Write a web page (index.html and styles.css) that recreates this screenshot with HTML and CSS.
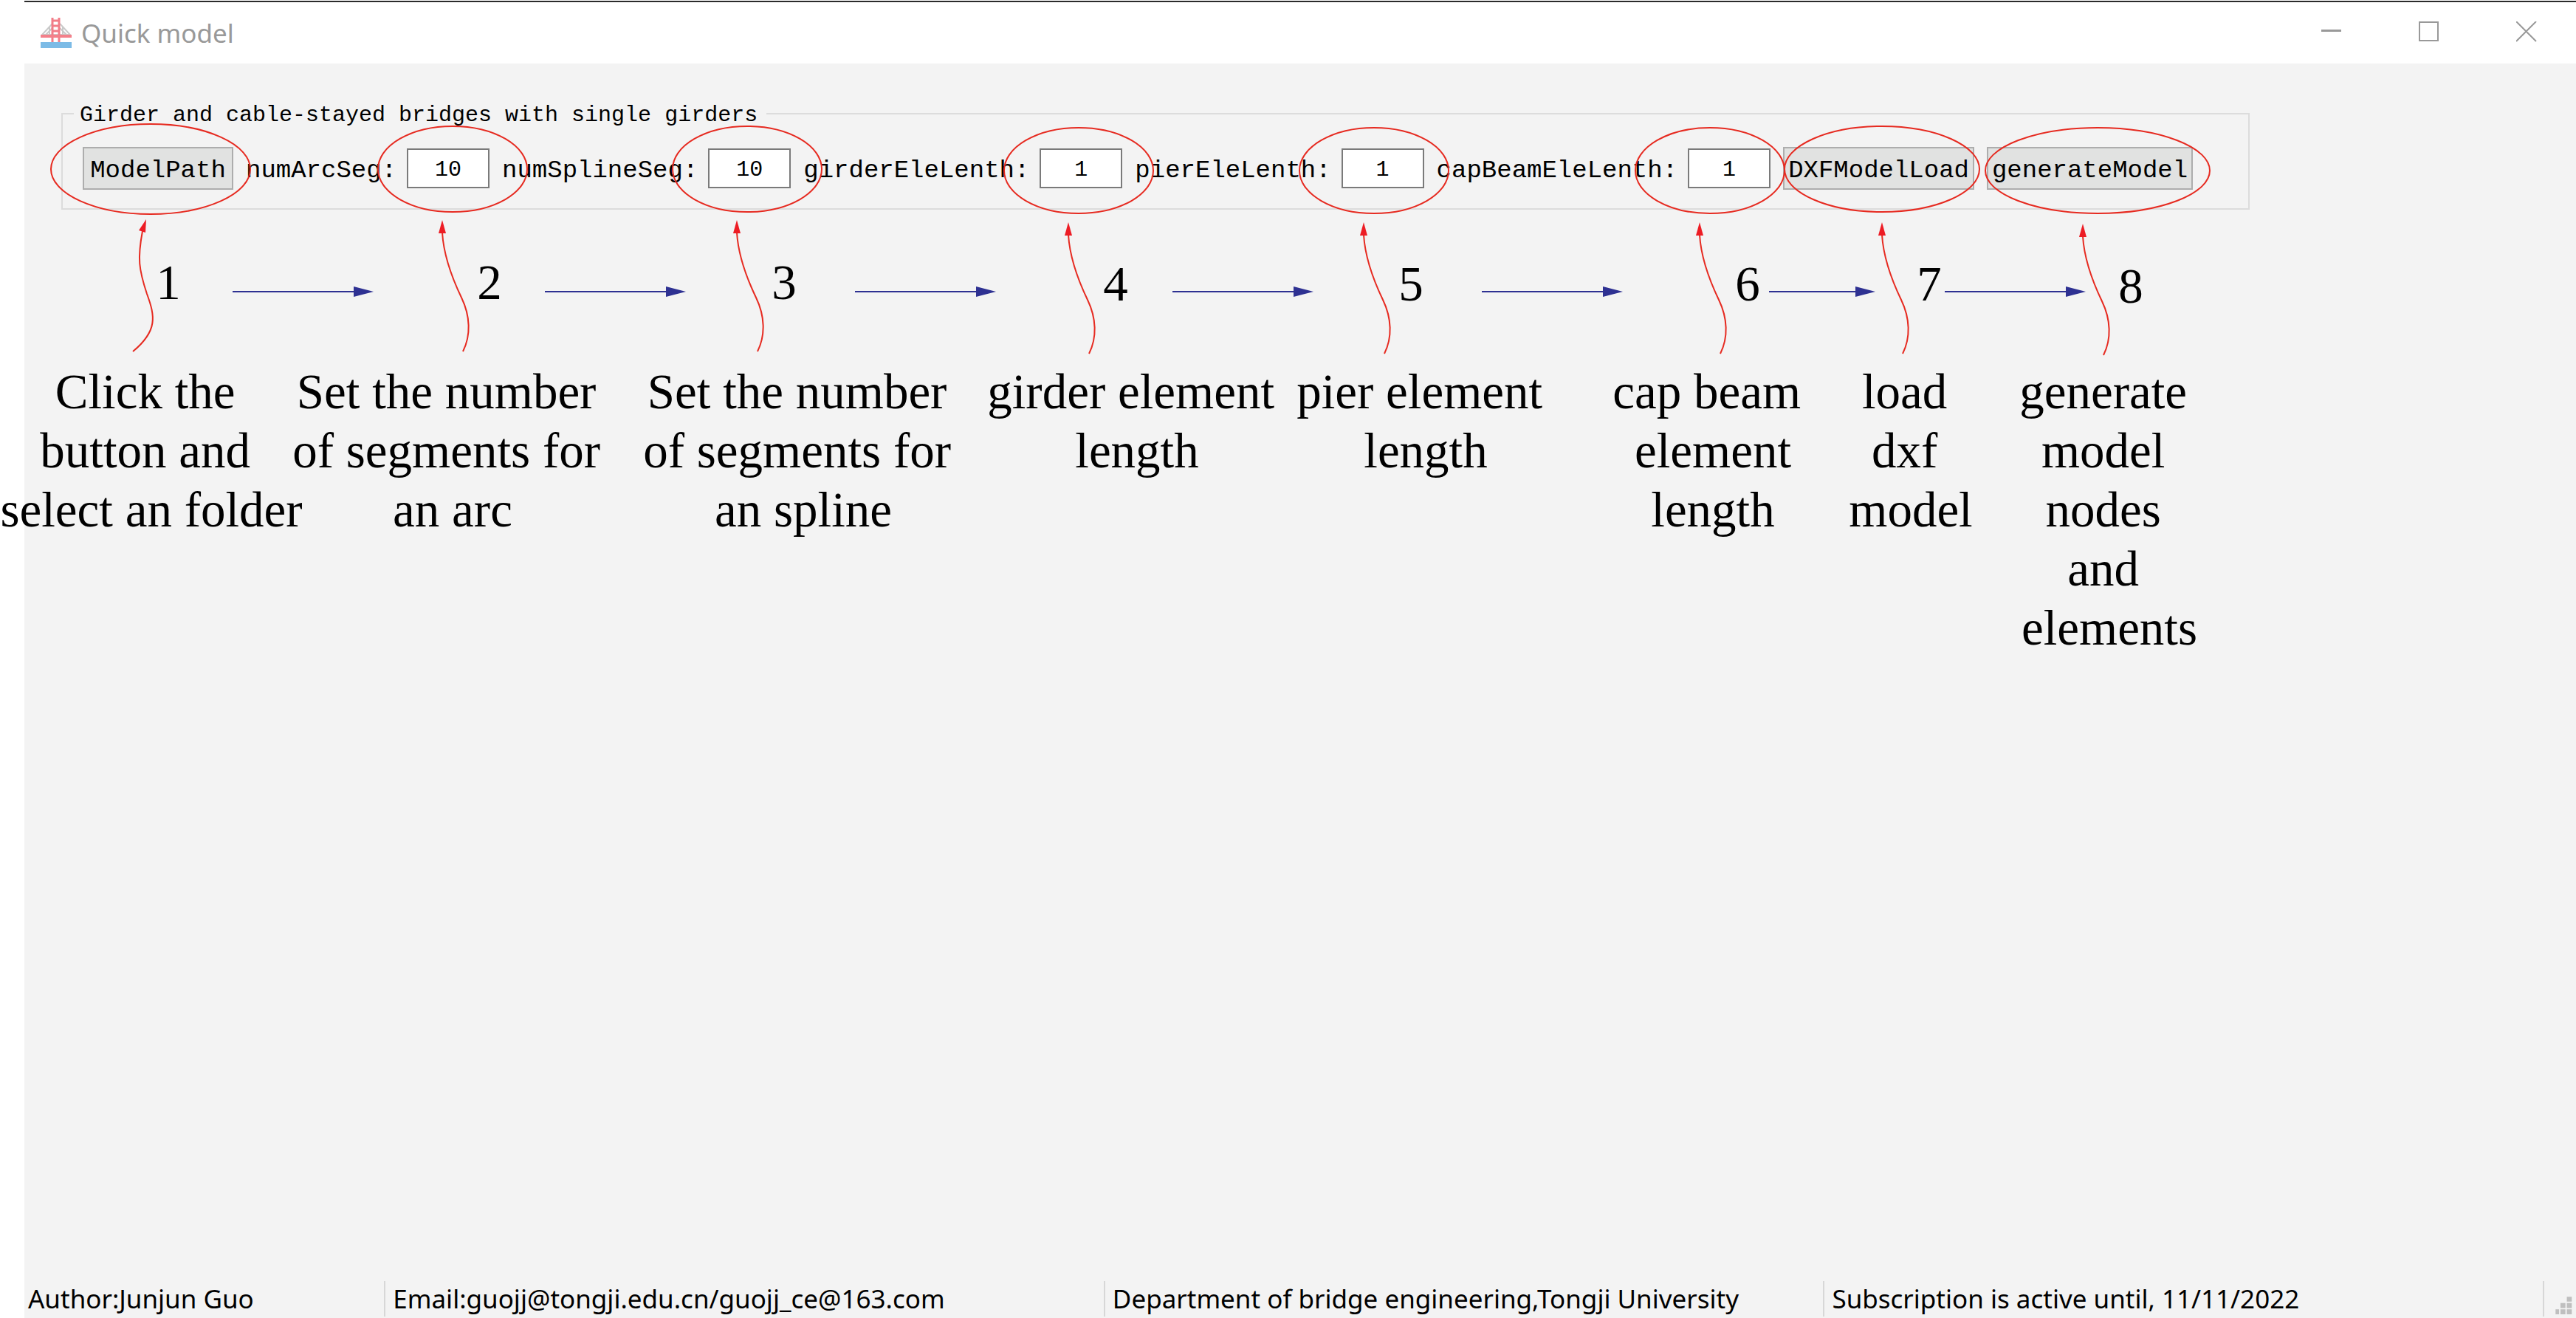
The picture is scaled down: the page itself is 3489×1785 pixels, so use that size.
FILE: index.html
```html
<!DOCTYPE html>
<html lang="en">
<head>
<meta charset="utf-8">
<title>Quick model</title>
<link rel="stylesheet" href="styles.css">
</head>
<body>
<div class="window">
  <header class="titlebar">
    <svg class="logo" viewBox="0 0 42 42" aria-hidden="true">
      <path d="M16 8 L2 23 H40 L26 8 M16 14 L7 23 M26 14 L35 23 M12 13 V23 M30 13 V23" fill="none" stroke="#c9c9c9" stroke-width="2"/>
      <path d="M16 0 V33 M25 0 V33 M15 4 H26 M15 11 H26 M15 18 H26" fill="none" stroke="#f27d88" stroke-width="3"/>
      <rect x="0" y="23" width="42" height="4" fill="#f4808a"/>
      <rect x="0" y="33" width="42" height="8" fill="#7cbbe6"/>
    </svg>
    <h1 class="title">Quick model</h1>
    <div class="controls">
      <button class="control" type="button" aria-label="Minimize"><svg viewBox="0 0 28 28"><path d="M0 12.500H27" stroke-width="3"/></svg></button>
      <button class="control" type="button" aria-label="Maximize"><svg viewBox="0 0 28 28"><path d="M1 1H26V26H1Z" stroke-width="2"/></svg></button>
      <button class="control" type="button" aria-label="Close"><svg viewBox="0 0 28 28"><path d="M0 0L27 27M27 0L0 27" stroke-width="2"/></svg></button>
    </div>
  </header>

  <main class="content">
    <fieldset class="group">
      <legend>Girder and cable-stayed bridges with single girders</legend>
      <div class="toolbar">
        <button class="push push-path" type="button">ModelPath</button>
        <div class="field"><label for="arc">numArcSeg:</label><input id="arc" type="text" value="10"></div>
        <div class="field"><label for="spline">numSplineSeg:</label><input id="spline" type="text" value="10"></div>
        <div class="field"><label for="girder">girderEleLenth:</label><input id="girder" type="text" value="1"></div>
        <div class="field"><label for="pier">pierEleLenth:</label><input id="pier" type="text" value="1"></div>
        <div class="field"><label for="cap">capBeamEleLenth:</label><input id="cap" type="text" value="1"></div>
        <button class="push push-load" type="button">DXFModelLoad</button>
        <button class="push push-generate" type="button">generateModel</button>
      </div>
    </fieldset>

    <div class="captions">
      <p>Click the&nbsp;<br>button and&nbsp;<br>select an folder</p>
      <p>Set the number&nbsp;<br>of segments for&nbsp;<br>an arc</p>
      <p>Set the number&nbsp;<br>of segments for&nbsp;<br>an spline</p>
      <p>girder element&nbsp;<br>length</p>
      <p>pier element&nbsp;<br>length</p>
      <p>cap beam&nbsp;<br>element<br>length</p>
      <p>load&nbsp;<br>dxf&nbsp;<br>model</p>
      <p>generate&nbsp;<br>model&nbsp;<br>nodes&nbsp;<br>and&nbsp;<br>elements</p>
    </div>
  </main>

  <footer class="statusbar">
    <span>Author:Junjun Guo</span>
    <span>Email:guojj@tongji.edu.cn/guojj_ce@163.com</span>
    <span>Department of bridge engineering,Tongji University</span>
    <span>Subscription is active until, 11/11/2022</span>
    <svg class="grip" viewBox="0 0 45 50" aria-hidden="true"><path d="M32 22h7v7h-7zM23 31h7v7h-7zM32 31h7v7h-7zM16 40h5v7h-5zM23 40h7v7h-7zM32 40h7v7h-7z" fill="#bfbfbf"/></svg>
  </footer>
</div>

<svg class="annotations" width="3046" height="500" viewBox="0 0 3046 500">
  <defs>
    <g id="pointer">
      <path class="curve" d="M0 17C2 50 14 80 26 105C38 130 39 156 28 178"/>
      <path class="tip" d="M0 0L5 18H-5Z"/>
    </g>
    <g id="next">
      <path class="line" d="M0 0H166"/>
      <path class="head" d="M164 -7L191 0L164 7Z"/>
    </g>
  </defs>
  <g class="curve">
    <ellipse cx="204" cy="229" rx="135" ry="61"/>
    <ellipse cx="613" cy="229" rx="101" ry="58"/>
    <ellipse cx="1012" cy="229" rx="101" ry="58"/>
    <ellipse cx="1461" cy="231" rx="101" ry="58"/>
    <ellipse cx="1861" cy="231" rx="101" ry="58"/>
    <ellipse cx="2316" cy="231" rx="101" ry="58"/>
    <ellipse cx="2549" cy="229" rx="132" ry="58"/>
    <ellipse cx="2841" cy="231" rx="152" ry="58"/>
    <path d="M193 313C186 350 188 365 199 398C210 428 214 448 180 476"/>
  </g>
  <path class="tip" d="M198 297L197 315L188 312Z"/>
  <use href="#pointer" x="599" y="298"/>
  <use href="#pointer" x="998" y="298"/>
  <use href="#pointer" x="1447" y="301"/>
  <use href="#pointer" x="1847" y="301"/>
  <use href="#pointer" x="2302" y="301"/>
  <use href="#pointer" x="2549" y="301"/>
  <use href="#pointer" x="2821" y="303"/>
  <use href="#next" x="315" y="395"/>
  <use href="#next" x="738" y="395"/>
  <use href="#next" x="1158" y="395"/>
  <use href="#next" x="1588" y="395"/>
  <use href="#next" x="2007" y="395"/>
  <path class="line" d="M2396 395H2515"/><path class="head" d="M2513 388L2540 395L2513 402Z"/>
  <use href="#next" x="2634" y="395"/>
  <g class="number">
    <text x="228" y="405">1</text>
    <text x="663" y="405">2</text>
    <text x="1062" y="405">3</text>
    <text x="1511" y="407">4</text>
    <text x="1911" y="407">5</text>
    <text x="2367" y="407">6</text>
    <text x="2613" y="407">7</text>
    <text x="2886" y="410">8</text>
  </g>
</svg>
</body>
</html>
```
FILE: styles.css
```css
* { box-sizing: border-box; }

body {
  margin: 0;
  position: relative;
  background: #fff;
  color: #000;
}

.window {
  display: flex;
  flex-direction: column;
  min-height: 100vh;
  padding: 1px 0 0 33px;
}

.titlebar {
  display: flex;
  align-items: center;
  height: 85px;
  padding-left: 22px;
  border-top: 2px solid #2b2b2b;
}

.logo { width: 42px; height: 42px; }

.title {
  margin: 0 auto 0 13px;
  font: 400 35px/48px "Noto Sans", sans-serif;
  color: #999;
}

.controls { display: flex; }

.control {
  width: 132px;
  height: 80px;
  padding: 0 2px 0 0;
  border: 0;
  background: none;
}

.control svg {
  width: 28px;
  height: 28px;
  fill: none;
  stroke: #999;
}

.content {
  flex: 1;
  padding-top: 52px;
  background: #f3f3f3;
}

.group {
  width: max-content;
  margin: 0 0 0 50px;
  padding: 29px 75px 25px 27px;
  border: 2px solid #dcdcdc;
  font-family: "Liberation Mono", monospace;
}

legend {
  margin-left: -12px;
  padding: 4px 12px 0 8px;
  font-size: 30px;
  line-height: 28px;
}

.toolbar {
  display: flex;
  align-items: center;
  gap: 17px;
}

.field {
  display: flex;
  align-items: center;
  gap: 14px;
  font-size: 34px;
}

.field label { padding-top: 6px; }

.field input {
  width: 112px;
  height: 54px;
  padding: 4px 0 0;
  border: 2px solid #7a7a7a;
  background: #fff;
  font: 30px "Liberation Mono", monospace;
  color: #000;
  text-align: center;
}

.push {
  height: 58px;
  padding: 6px 0 0;
  border: 2px solid #adadad;
  background: #e1e2e1;
  font: 34px "Liberation Mono", monospace;
  color: #000;
}

.push-path { width: 204px; }
.push-load { width: 259px; }
.push-generate { width: 279px; }

.captions {
  display: grid;
  grid-template-columns: 410px 406px 544px 360px 422px 356px 180px 358px;
  margin: 206px 0 0 -33px;
  font: 67px/80px "Liberation Serif", serif;
  text-align: center;
  white-space: nowrap;
}

/* long lines may run past their column and still stay centred on it */
.captions p { margin: 0 -40px; }

.statusbar {
  display: grid;
  grid-template-columns: 1fr 2fr 2fr 2fr 45px;
  height: 50px;
  background: #f3f3f3;
  font: 35px/48px "Noto Sans", sans-serif;
  white-space: nowrap;
}

.statusbar span {
  height: 48px;
  padding-left: 10px;
  border-left: 2px solid #d7d7d7;
}

.statusbar span:first-child {
  padding-left: 5px;
  border-left: 0;
}

.grip {
  width: 45px;
  height: 48px;
  border-left: 2px solid #d7d7d7;
}

.annotations {
  position: absolute;
  top: 0;
  left: 0;
  pointer-events: none;
}

.curve { fill: none; stroke: #e62a20; stroke-width: 2; }
.tip { fill: #ed1c24; }
.line { stroke: #2e3192; stroke-width: 2; }
.head { fill: #2e3192; }

.number {
  font: 67px "Liberation Serif", serif;
  text-anchor: middle;
}
```
